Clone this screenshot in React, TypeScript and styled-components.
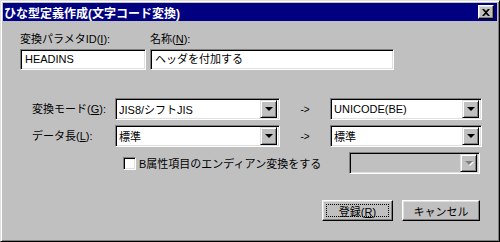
import styled, { createGlobalStyle } from 'styled-components';

const GlobalStyle = createGlobalStyle`
  html, body {
    margin: 0;
    padding: 0;
    background: #c0c0c0;
  }

  body {
    font-family: "Liberation Sans", "Noto Sans CJK JP", sans-serif;
    font-size: 11px;
    color: #000;
  }
`;

const Window = styled.div`
  box-sizing: border-box;
  width: 500px;
  height: 242px;
  padding: 2px;
  background: #c0c0c0;
  border: 1px solid;
  border-color: #dfdfdf #000 #000 #dfdfdf;
  box-shadow: inset 1px 1px #fff, inset -1px -1px #808080;
  display: flex;
  flex-direction: column;
`;

const TitleBar = styled.div`
  height: 18px;
  background: #000080;
  display: flex;
  align-items: center;
  justify-content: space-between;
  padding: 0 3px 0 1px;

  h1 {
    margin: 0;
    color: #fff;
    font-size: 12px;
    font-weight: bold;
  }
`;

const CloseButton = styled.button`
  box-sizing: border-box;
  width: 16px;
  height: 14px;
  padding: 0;
  background: #c0c0c0;
  border: 1px solid;
  border-color: #fff #000 #000 #fff;
  box-shadow: inset -1px -1px #808080, inset 1px 1px #dfdfdf;
  display: flex;
  align-items: center;
  justify-content: center;
`;

const Body = styled.div`
  display: flex;
  flex-direction: column;
  padding: 11px 17px 0 17px;
`;

const FieldRow = styled.div`
  display: flex;
  gap: 4px;
`;

const Field = styled.div<{ $width: number }>`
  display: flex;
  flex-direction: column;
  gap: 2px;
  width: ${(p) => p.$width}px;
`;

const Label = styled.label`
  display: block;
  height: 15px;
  line-height: 15px;
  white-space: nowrap;

  u {
    text-decoration: underline;
    text-underline-offset: 1px;
  }
`;

const Sunken = styled.div`
  box-sizing: border-box;
  background: #fff;
  border: 1px solid;
  border-color: #808080 #fff #fff #808080;
  box-shadow: inset 1px 1px #000, inset -1px -1px #dfdfdf;
`;

const TextBox = styled(Sunken)`
  height: 21px;
  padding: 0 4px;
  line-height: 19px;
  white-space: nowrap;
`;

const ComboGrid = styled.div`
  display: grid;
  grid-template-columns: 83px 165px 50px 152px;
  grid-auto-rows: 22px;
  row-gap: 5px;
  margin-top: 28px;
  padding-left: 12px;
  align-items: center;
`;

const Arrow = styled.span`
  text-align: center;
  font-size: 10px;
  line-height: 22px;
  padding-top: 2px;
`;

const ComboBox = styled(Sunken)<{ $disabled?: boolean; $width?: number }>`
  height: 22px;
  width: ${(p) => (p.$width ? `${p.$width}px` : 'auto')};
  display: flex;
  align-items: center;
  padding: 2px 2px 2px 3px;
  background: ${(p) => (p.$disabled ? '#c0c0c0' : '#fff')};

  span {
    flex: 1;
    white-space: nowrap;
    overflow: hidden;
  }
`;

const DropButton = styled.div<{ $disabled?: boolean }>`
  box-sizing: border-box;
  width: 17px;
  height: 18px;
  background: #c0c0c0;
  border: 1px solid;
  border-color: #dfdfdf #000 #000 #dfdfdf;
  box-shadow: inset 1px 1px #fff, inset -1px -1px #808080;
  display: flex;
  align-items: center;
  justify-content: center;

  &::after {
    content: '';
    width: 0;
    height: 0;
    border-left: 4px solid transparent;
    border-right: 4px solid transparent;
    border-top: 4px solid ${(p) => (p.$disabled ? '#808080' : '#000')};
    filter: ${(p) => (p.$disabled ? 'drop-shadow(1px 1px 0 #fff)' : 'none')};
  }
`;

const CheckRow = styled.div`
  display: flex;
  align-items: center;
  margin-top: 5px;
  height: 22px;
`;

const CheckLabel = styled.label`
  display: flex;
  align-items: center;
  gap: 3px;
  margin-left: 103px;
  width: 229px;
  white-space: nowrap;
`;

const CheckBox = styled(Sunken)`
  width: 13px;
  height: 13px;
`;

const ButtonRow = styled.div`
  display: flex;
  justify-content: flex-end;
  gap: 9px;
  margin-top: 26px;
`;

const PushButton = styled.button<{ $width: number; $focused?: boolean }>`
  box-sizing: border-box;
  position: relative;
  width: ${(p) => p.$width}px;
  height: 21px;
  padding: 0;
  font: inherit;
  color: #000;
  background: #c0c0c0;
  border: 1px solid;
  border-color: #fff #000 #000 #fff;
  box-shadow: inset -1px -1px #808080, inset 1px 1px #dfdfdf;

  &::after {
    content: '';
    display: ${(p) => (p.$focused ? 'block' : 'none')};
    position: absolute;
    inset: 3px;
    border: 1px dotted #000;
  }

  u {
    text-decoration: underline;
  }
`;

const CloseIcon = () => (
  <svg width="8" height="7" viewBox="0 0 8 7">
    <path d="M0 0h2l2 2 2-2h2L5 3.5 8 7H6L4 5 2 7H0l3-3.5z" fill="#000" />
  </svg>
);

export default function App() {
  return (
    <>
      <GlobalStyle />
      <Window>
        <TitleBar>
          <h1>ひな型定義作成(文字コード変換)</h1>
          <CloseButton aria-label="閉じる">
            <CloseIcon />
          </CloseButton>
        </TitleBar>
        <Body>
          <FieldRow>
            <Field $width={126}>
              <Label>
                変換パラメタID(<u>I</u>):
              </Label>
              <TextBox>HEADINS</TextBox>
            </Field>
            <Field $width={244}>
              <Label>
                名称(<u>N</u>):
              </Label>
              <TextBox>ヘッダを付加する</TextBox>
            </Field>
          </FieldRow>

          <ComboGrid>
            <Label>
              変換モード(<u>G</u>):
            </Label>
            <ComboBox>
              <span>JIS8/シフトJIS</span>
              <DropButton />
            </ComboBox>
            <Arrow>-&gt;</Arrow>
            <ComboBox>
              <span>UNICODE(BE)</span>
              <DropButton />
            </ComboBox>

            <Label>
              データ長(<u>L</u>):
            </Label>
            <ComboBox>
              <span>標準</span>
              <DropButton />
            </ComboBox>
            <Arrow>-&gt;</Arrow>
            <ComboBox>
              <span>標準</span>
              <DropButton />
            </ComboBox>
          </ComboGrid>

          <CheckRow>
            <CheckLabel>
              <CheckBox />
              B属性項目のエンディアン変換をする
            </CheckLabel>
            <ComboBox $disabled $width={132}>
              <span />
              <DropButton $disabled />
            </ComboBox>
          </CheckRow>

          <ButtonRow>
            <PushButton $width={71} $focused>
              登録(<u>R</u>)
            </PushButton>
            <PushButton $width={78}>キャンセル</PushButton>
          </ButtonRow>
        </Body>
      </Window>
    </>
  );
}
